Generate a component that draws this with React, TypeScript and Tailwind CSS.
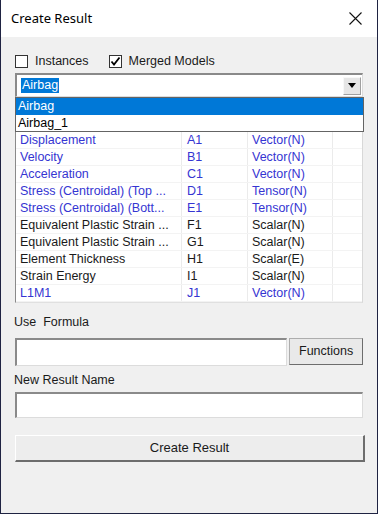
const rows = [
  { name: "Displacement", code: "A1", type: "Vector(N)", blue: true },
  { name: "Velocity", code: "B1", type: "Vector(N)", blue: true },
  { name: "Acceleration", code: "C1", type: "Vector(N)", blue: true },
  { name: "Stress (Centroidal) (Top ...", code: "D1", type: "Tensor(N)", blue: true },
  { name: "Stress (Centroidal) (Bott...", code: "E1", type: "Tensor(N)", blue: true },
  { name: "Equivalent Plastic Strain ...", code: "F1", type: "Scalar(N)", blue: false },
  { name: "Equivalent Plastic Strain ...", code: "G1", type: "Scalar(N)", blue: false },
  { name: "Element Thickness", code: "H1", type: "Scalar(E)", blue: false },
  { name: "Strain Energy", code: "I1", type: "Scalar(N)", blue: false },
  { name: "L1M1", code: "J1", type: "Vector(N)", blue: true },
];

function Checkbox({ checked, label }: { checked?: boolean; label: string }) {
  return (
    <label className="flex items-center gap-[7px]">
      <span className="w-[13px] h-[13px] border border-[#333] bg-white flex items-center justify-center">
        {checked && (
          <svg width="11" height="11" viewBox="0 0 11 11">
            <path d="M1.5 5.5 L4 8.5 L9.5 1.5" fill="none" stroke="#000" strokeWidth="1.8" />
          </svg>
        )}
      </span>
      <span>{label}</span>
    </label>
  );
}

export default function App() {
  return (
    <div
      className="w-[378px] h-[514px] flex flex-col bg-[#f0f0f0] border-x border-b border-[#1f2342] text-[12px] text-[#1a1a1a]"
      style={{ fontFamily: '"Liberation Sans", Arial, sans-serif' }}
    >
      <div className="h-[37px] bg-white flex items-center justify-between pl-[10px] pr-[15px] shrink-0">
        <span className="text-[13px] text-black" style={{ fontFamily: '"Noto Sans", sans-serif' }}>
          Create Result
        </span>
        <svg width="13" height="13" viewBox="0 0 13 13">
          <path d="M0.5 0.5 L12.5 12.5 M12.5 0.5 L0.5 12.5" stroke="#111" strokeWidth="1.1" />
        </svg>
      </div>

      <div className="flex flex-col px-[14px]">
        <div className="mt-[18px] h-[13px] flex items-center gap-[20px] leading-none text-[12.5px]">
          <Checkbox label="Instances" />
          <Checkbox checked label="Merged Models" />
        </div>

        <div className="mt-[5px] h-[24px] bg-white border-t-2 border-l-2 border-[#8a8a8a] border-r border-b border-r-[#dcdcdc] border-b-[#dcdcdc] flex items-center pl-[4px] pr-[1px]">
          <span className="bg-[#0078d7] text-white px-[1px] leading-[15px] text-[12.5px]">Airbag</span>
          <span className="ml-auto w-[18px] h-[18px] bg-[#e6e6e6] border border-[#f8f8f8] border-r-[#a0a0a0] border-b-[#a0a0a0] flex items-center justify-center">
            <svg width="8" height="5" viewBox="0 0 8 5">
              <path d="M0 0 H8 L4 5 Z" fill="#000" />
            </svg>
          </span>
        </div>

        <div className="relative text-[12.5px]">
          <div className="absolute left-0 top-0 w-[349px] z-10 bg-white border border-[#646464]">
            <div className="h-[17px] bg-[#0078d7] text-white pl-[2px] leading-[17px]">Airbag</div>
            <div className="h-[16px] pl-[2px] leading-[16px] text-black">Airbag_1</div>
          </div>

          <div className="h-[206px] bg-white border-l border-t border-[#8a8a8a] border-r border-b border-r-[#d8d8d8] border-b-[#e0e0e0]">
            <div className="h-[34px] border-b border-[#f3f3f3]" />
            {rows.map((r, i) => (
              <div
                key={i}
                className={`h-[17px] grid grid-cols-[166px_66px_85px_1fr] border-b border-[#f3f3f3] leading-[16px] ${
                  r.blue ? "text-[#3535d2]" : "text-[#1a1a1a]"
                }`}
              >
                <span className="pl-[4px] border-r border-[#ebebeb] whitespace-nowrap overflow-hidden">{r.name}</span>
                <span className="pl-[5px] border-r border-[#ebebeb]">{r.code}</span>
                <span className="pl-[4px] border-r border-[#ebebeb]">{r.type}</span>
                <span />
              </div>
            ))}
          </div>
        </div>

        <div className="mt-[12px] h-[14px] leading-[14px] -ml-[1px] text-[12.5px]">Use&nbsp; Formula</div>

        <div className="mt-[9px] h-[28px] flex gap-[2px]">
          <div className="w-[273px] h-[28px] bg-white border-t-2 border-l-2 border-[#8a8a8a] border-r border-b border-r-[#dcdcdc] border-b-[#dcdcdc]" />
          <button className="w-[74px] h-[27px] bg-[#e9e9e9] border border-[#adadad] border-r-[#6d6d6d] border-b-[#6d6d6d] text-[12.5px] text-[#1a1a1a]">
            Functions
          </button>
        </div>

        <div className="mt-[7px] h-[14px] leading-[14px] -ml-[1px] text-[12.5px]">New Result Name</div>

        <div className="mt-[5px] h-[26px] bg-white border-t-2 border-l-2 border-[#8a8a8a] border-r border-b border-r-[#dcdcdc] border-b-[#dcdcdc]" />

        <button className="mt-[17px] w-[350px] h-[27px] bg-[#ededed] border border-white border-r-2 border-b-2 border-r-[#6d6d6d] border-b-[#6d6d6d] text-[13px] text-[#1a1a1a]">
          Create Result
        </button>
      </div>
    </div>
  );
}
